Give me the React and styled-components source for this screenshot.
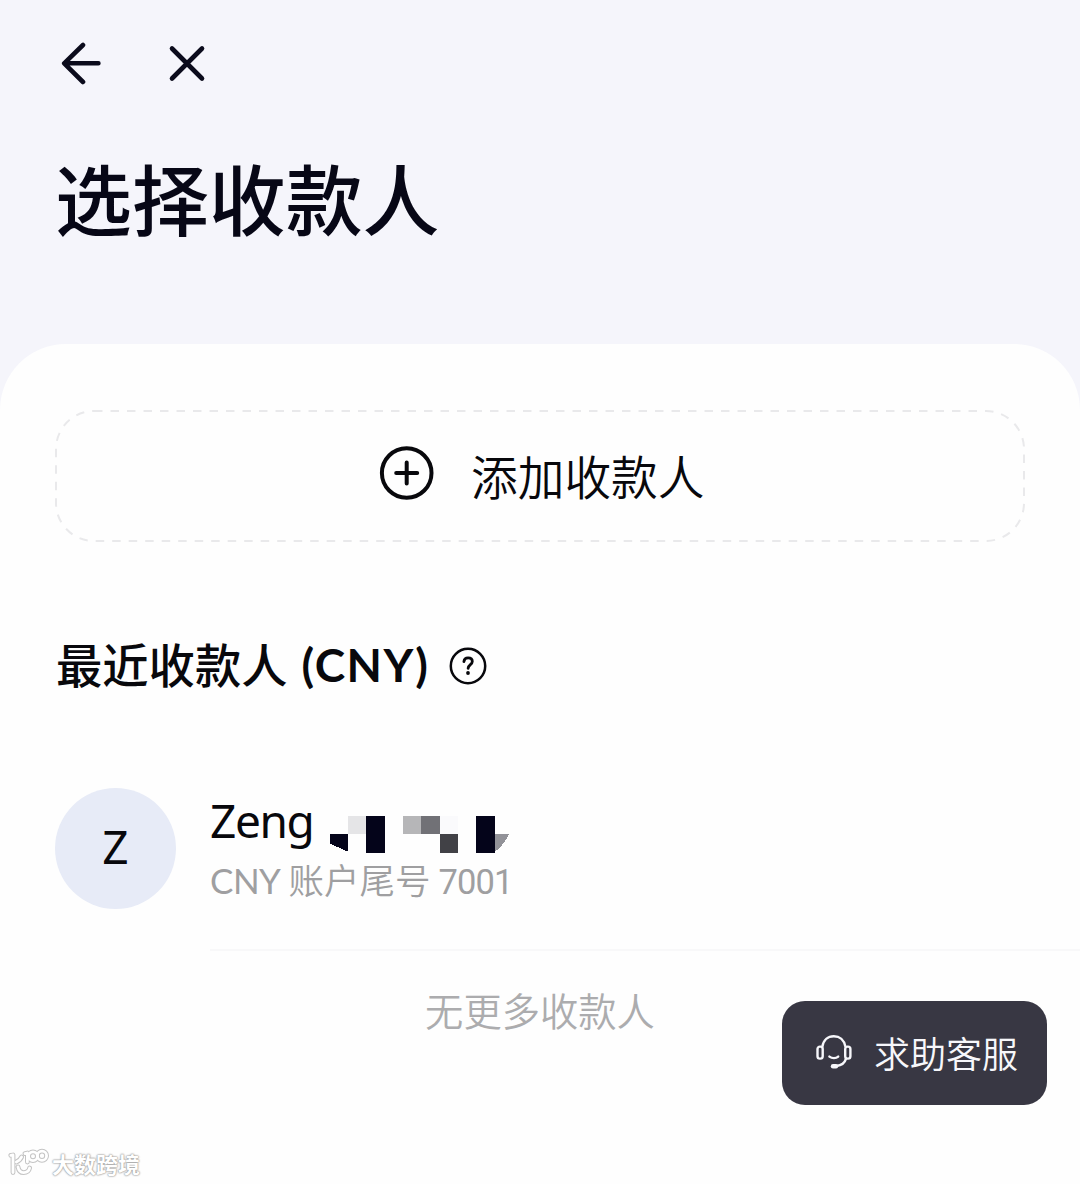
import React from 'react'
import styled, { createGlobalStyle } from 'styled-components'

const recipients = [
  { id: 1, initial: 'Z', name: 'Zeng', currency: 'CNY', label: '账户尾号', tail: '7001' },
]

const BackIcon = () => (
  <svg width='44' height='44' viewBox='0 0 44 44' fill='none' stroke='#0b0b1c' strokeWidth='4.6' strokeLinecap='round' strokeLinejoin='round'>
    <path d='M26 3 L7.2 21.3 L26 40 M7.4 21.3 H41.4' />
  </svg>
)

const CloseIcon = () => (
  <svg width='44' height='44' viewBox='0 0 44 44' fill='none' stroke='#0b0b1c' strokeWidth='4.6' strokeLinecap='round'>
    <path d='M7 6.5 L37 36.5 M37 6.5 L7 36.5' />
  </svg>
)

const PlusIcon = () => (
  <svg width='56' height='56' viewBox='0 0 56 56' fill='none' stroke='#08080c' strokeWidth='4' strokeLinecap='round'>
    <circle cx='27.7' cy='28' r='24.8' />
    <path d='M27.7 17.5 V38.5 M17.2 28 H38.2' />
  </svg>
)

const HelpIcon = () => (
  <svg width='38' height='38' viewBox='0 0 38 38' fill='none' stroke='#08080c' strokeLinecap='round' strokeLinejoin='round'>
    <circle cx='19' cy='19' r='17.2' strokeWidth='2.5' />
    <path d='M14.9 14.6 C15.2 11.9 17 10.9 19.1 10.9 C21.5 10.9 23.3 12.3 23.3 14.5 C23.3 17.6 19.2 17.6 19.1 21.4' strokeWidth='2.8' />
    <circle cx='19' cy='26' r='1.9' fill='#08080c' stroke='none' />
  </svg>
)

const HeadsetIcon = () => (
  <svg width='36' height='36' viewBox='0 0 36 36' fill='none' stroke='#f7f7fb' strokeWidth='2.4' strokeLinecap='round' strokeLinejoin='round'>
    <path d='M6.4 12.6 C7.4 6 12 2.2 17.8 2.2 C23.6 2.2 28.2 6 29.4 12.6' />
    <rect x='1.5' y='12.6' width='5.2' height='12' rx='2.4' />
    <rect x='29.2' y='12.6' width='5.2' height='12' rx='2.4' />
    <path d='M13.4 22.6 C16 24.6 20 24.6 22.2 22.6' />
    <path d='M30 24.6 C28.8 29 25.4 31.4 20.4 32' />
    <path d='M17 32.2 H20' strokeWidth='4.4' />
  </svg>
)

// blocks hiding the rest of the name
const MaskedName = () => (
  <svg width='179' height='37' viewBox='30 35 537 111' shapeRendering='crispEdges'>
    <path d='M30 90 H84 V142 L30 118 Z' fill='#04041a' />
    <rect x='84' y='35' width='55' height='55' fill='#e5e5e7' />
    <rect x='139' y='35' width='55' height='110' fill='#04041a' />
    <rect x='249' y='35' width='55' height='55' fill='#b6b6b8' />
    <rect x='304' y='35' width='55' height='55' fill='#717176' />
    <rect x='359' y='35' width='55' height='55' fill='#fafafc' />
    <rect x='359' y='90' width='55' height='55' fill='#414146' />
    <rect x='469' y='35' width='55' height='110' fill='#04041a' />
    <path d='M524 90 H566 Q552 122 524 143 Z' fill='#929298' />
  </svg>
)

const WatermarkLogo = () => (
  <svg width='42' height='30' viewBox='0 0 42 30' fill='none' strokeLinecap='round' strokeLinejoin='round'>
    {['#c4c4c4', '#ffffff'].map((color, i) => (
      <g key={color} stroke={color} strokeWidth={i ? 2.8 : 4.8}>
        <path d='M3.8 7.4 L6 7 V24.5 M14.6 9 C13.6 11.4 11.4 13 9.4 14 M11 19 C11.6 22.6 13.6 24.6 16.6 24.6 C20 24.6 22 22.8 22.6 20' />
        <path d='M18 5.6 L20.4 5 V14' />
        <circle cx='26' cy='8.2' r='4.4' />
        <circle cx='35' cy='7.8' r='4.6' />
      </g>
    ))}
  </svg>
)

const App = () => {
  return (
    <>
      <GlobalStyle />
      <Page>
        <Header>
          <NavBar>
            <IconButton aria-label='返回'><BackIcon /></IconButton>
            <IconButton aria-label='关闭'><CloseIcon /></IconButton>
          </NavBar>
          <Title>选择收款人</Title>
        </Header>
        <Sheet>
          <AddButton>
            <DashedOutline>
              <rect x='1' y='1' width='968' height='130' rx='38' />
            </DashedOutline>
            <PlusIcon />
            <AddLabel>添加收款人</AddLabel>
          </AddButton>
          <SectionTitle>
            <span>最近收款人</span>
            <Currency>(CNY)</Currency>
            <HelpIcon />
          </SectionTitle>
          {recipients.map((r) => (
            <Recipient key={r.id}>
              <Avatar>{r.initial}</Avatar>
              <Details>
                <NameRow>
                  <Name>{r.name}</Name>
                  <MaskedName />
                </NameRow>
                <Account>
                  <Latin>{r.currency}</Latin>
                  <span>{r.label}</span>
                  <Digits>{r.tail}</Digits>
                </Account>
              </Details>
            </Recipient>
          ))}
          <EmptyNote>无更多收款人</EmptyNote>
        </Sheet>
        <SupportButton>
          <HeadsetIcon />
          <span>求助客服</span>
        </SupportButton>
        <Watermark>
          <WatermarkLogo />
          <span>大数跨境</span>
        </Watermark>
      </Page>
    </>
  )
}

export default App

const GlobalStyle = createGlobalStyle`
  * {
    box-sizing: border-box;
  }

  body {
    margin: 0;
    background-color: #fefefe;
    font-family: "Noto Sans CJK SC", sans-serif;
    color: #08080c;
  }

  button {
    font: inherit;
    color: inherit;
    padding: 0;
    border: none;
    background: none;
  }

  svg {
    display: block;
    flex-shrink: 0;
  }
`

const Page = styled.div`
  position: relative;
  width: 1080px;
  height: 1184px;
  overflow: hidden;
  background-color: #f5f5fb;
`

const Header = styled.header`
  height: 344px;
  padding: 42px 57px 0;
`

const NavBar = styled.nav`
  display: flex;
  gap: 64px;
`

const IconButton = styled.button`
  width: 44px;
  height: 44px;
`

const Title = styled.h1`
  margin: 56px 0 0 -2px;
  font-size: 76.9px;
  line-height: 110px;
  font-weight: 500;
  color: #070716;
`

const Sheet = styled.main`
  height: 840px;
  padding: 66px 55px 0;
  border-radius: 66px 66px 0 0;
  background-color: #fefefe;
`

const AddButton = styled.button`
  position: relative;
  display: flex;
  align-items: center;
  gap: 36px;
  width: 970px;
  height: 132px;
  padding: 0 0 6px 324px;
`

const AddLabel = styled.span`
  padding-top: 3px;
  font-size: 46.7px;
  line-height: 60px;
  font-weight: 350;
`

const DashedOutline = styled.svg`
  position: absolute;
  inset: 0;
  width: 100%;
  height: 100%;
  fill: none;
  stroke: #e9e9eb;
  stroke-width: 2;
  stroke-dasharray: 8.5 8;
`

const SectionTitle = styled.h2`
  display: flex;
  align-items: center;
  height: 60px;
  margin: 91px 0 0 1px;
  font-size: 46.3px;
  line-height: 60px;
  font-weight: 500;

  svg {
    margin-top: 6px;
  }
`

const Currency = styled.span`
  margin: 4px 20px 0 14px;
  font-family: Lato, sans-serif;
  font-size: 46px;
  font-weight: 700;
  letter-spacing: 1.5px;
`

const Recipient = styled.div`
  display: flex;
  gap: 34px;
  height: 163px;
  margin-top: 95px;
`

const Avatar = styled.div`
  width: 121px;
  height: 121px;
  border-radius: 50%;
  background-color: #e7ebf7;
  font-family: "Noto Sans", sans-serif;
  font-size: 46px;
  line-height: 117px;
  text-align: center;
`

const Details = styled.div`
  flex: 1;
  margin-right: -55px;
  padding-top: 4px;
  border-bottom: 2px solid #f8f8f9;
`

const NameRow = styled.div`
  display: flex;
  align-items: flex-end;
  gap: 16px;
  height: 61px;
`

const Name = styled.span`
  width: 104px;
  height: 61px;
  font-family: "Noto Sans", sans-serif;
  font-size: 46px;
  line-height: 56px;
  letter-spacing: -1.4px;
`

const Account = styled.div`
  display: flex;
  align-items: baseline;
  gap: 8px;
  font-size: 35.5px;
  line-height: 52px;
  font-weight: 350;
  color: #9f9fa1;
`

const Latin = styled.span`
  font-family: Lato, sans-serif;
  font-size: 35px;
  font-weight: 400;
  letter-spacing: -0.5px;
`

const Digits = styled.span`
  font-family: Roboto, sans-serif;
  font-size: 34.5px;
  font-weight: 400;
  letter-spacing: -0.9px;
`

const EmptyNote = styled.p`
  margin: 32px 0 0;
  text-align: center;
  font-size: 38.3px;
  line-height: 54px;
  font-weight: 350;
  color: #acacae;
`

const SupportButton = styled.button`
  position: absolute;
  left: 782px;
  top: 1001px;
  display: flex;
  align-items: center;
  gap: 22px;
  width: 265px;
  height: 104px;
  padding: 0 0 2px 34px;
  border-radius: 23px;
  background-color: #383743;
  font-size: 36px;
  line-height: 50px;
  font-weight: 350;
  color: #f7f7fb;
`

const Watermark = styled.div`
  position: absolute;
  left: 7px;
  top: 1147px;
  display: flex;
  align-items: center;
  gap: 3px;
  font-size: 22px;
  line-height: 32px;
  font-weight: 700;
  color: #ffffff;
  text-shadow: 0 0 2px #999999, 0 0 2px #a8a8a8, 0 0 1px #b8b8b8;
`
